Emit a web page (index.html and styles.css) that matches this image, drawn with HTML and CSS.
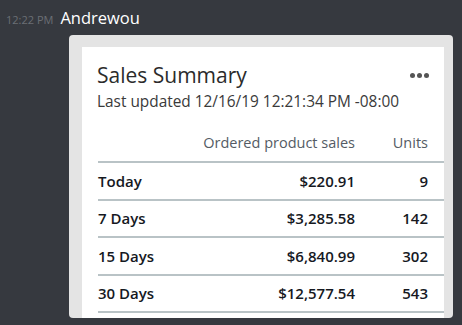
FILE: index.html
```html
<!DOCTYPE html>
<html>
<head>
<meta charset="utf-8">
<link rel="stylesheet" href="styles.css">
</head>
<body>
<div class="msg">
  <div class="msg-head">
    <span class="time">12:22 PM</span>
    <span class="author">Andrewou</span>
  </div>
  <div class="frame">
    <div class="card">
      <div class="card-head">
        <div>
          <div class="title">Sales Summary</div>
          <div class="updated">Last updated 12/16/19 12:21:34 PM -08:00</div>
        </div>
        <div class="more"><span></span><span></span><span></span></div>
      </div>
      <table class="tbl">
        <thead>
          <tr><th></th><th class="num">Ordered product sales</th><th class="num units">Units</th></tr>
        </thead>
        <tbody>
          <tr><td>Today</td><td class="num">$220.91</td><td class="num units">9</td></tr>
          <tr><td>7 Days</td><td class="num">$3,285.58</td><td class="num units">142</td></tr>
          <tr><td>15 Days</td><td class="num">$6,840.99</td><td class="num units">302</td></tr>
          <tr><td>30 Days</td><td class="num">$12,577.54</td><td class="num units">543</td></tr>
        </tbody>
      </table>
    </div>
  </div>
</div>
</body>
</html>
```
FILE: styles.css
```css
html, body {
  margin: 0;
  padding: 0;
  background: #36393f;
  height: 325px;
  overflow: hidden;
}
.msg {
  padding: 6px 0 0 6px;
}
.msg-head {
  display: flex;
  align-items: baseline;
  gap: 7px;
  height: 24px;
}
.time {
  font-family: "Open Sans", sans-serif;
  font-size: 11px;
  color: #6b6f75;
}
.author {
  font-family: "Open Sans", sans-serif;
  font-size: 16.5px;
  color: #ffffff;
}
.frame {
  margin: 5px 0 0 63px;
  width: 384px;
  height: 283px;
  background: #e4e4e4;
  border-radius: 4px;
  padding: 12px 9px 0 13px;
  box-sizing: border-box;
  overflow: hidden;
}
.card {
  background: #ffffff;
  height: 300px;
  padding: 14px 0 0 15px;
  box-sizing: border-box;
  font-family: "Open Sans", sans-serif;
  color: #232f3e;
}
.card-head {
  display: flex;
  justify-content: space-between;
  align-items: flex-start;
  padding-right: 15px;
}
.title {
  font-size: 21px;
  line-height: 28px;
  color: #2b2b2b;
}
.updated {
  margin-top: 3px;
  font-size: 15.4px;
  line-height: 20px;
  color: #3a3a3a;
}
.more {
  display: flex;
  gap: 2px;
  margin-top: 12px;
}
.more span {
  width: 5px;
  height: 5px;
  border-radius: 50%;
  background: #555;
}
.tbl {
  margin-top: 21px;
  margin-left: 1px;
  width: calc(100% - 1px);
  border-collapse: collapse;
  font-size: 15px;
}
.tbl th {
  font-weight: normal;
  font-size: 14.5px;
  line-height: 20px;
  color: #545b64;
  height: 28px;
  padding: 0;
  vertical-align: top;
  text-align: left;
  border-bottom: 2px solid #b9c3c6;
}
.tbl td {
  font-weight: 600;
  color: #16191f;
  height: 35.5px;
  padding: 0;
  border-bottom: 2px solid #b9c3c6;
}
.tbl .num {
  text-align: right;
}
.tbl .units {
  width: 73px;
  padding-right: 16px;
}
```
